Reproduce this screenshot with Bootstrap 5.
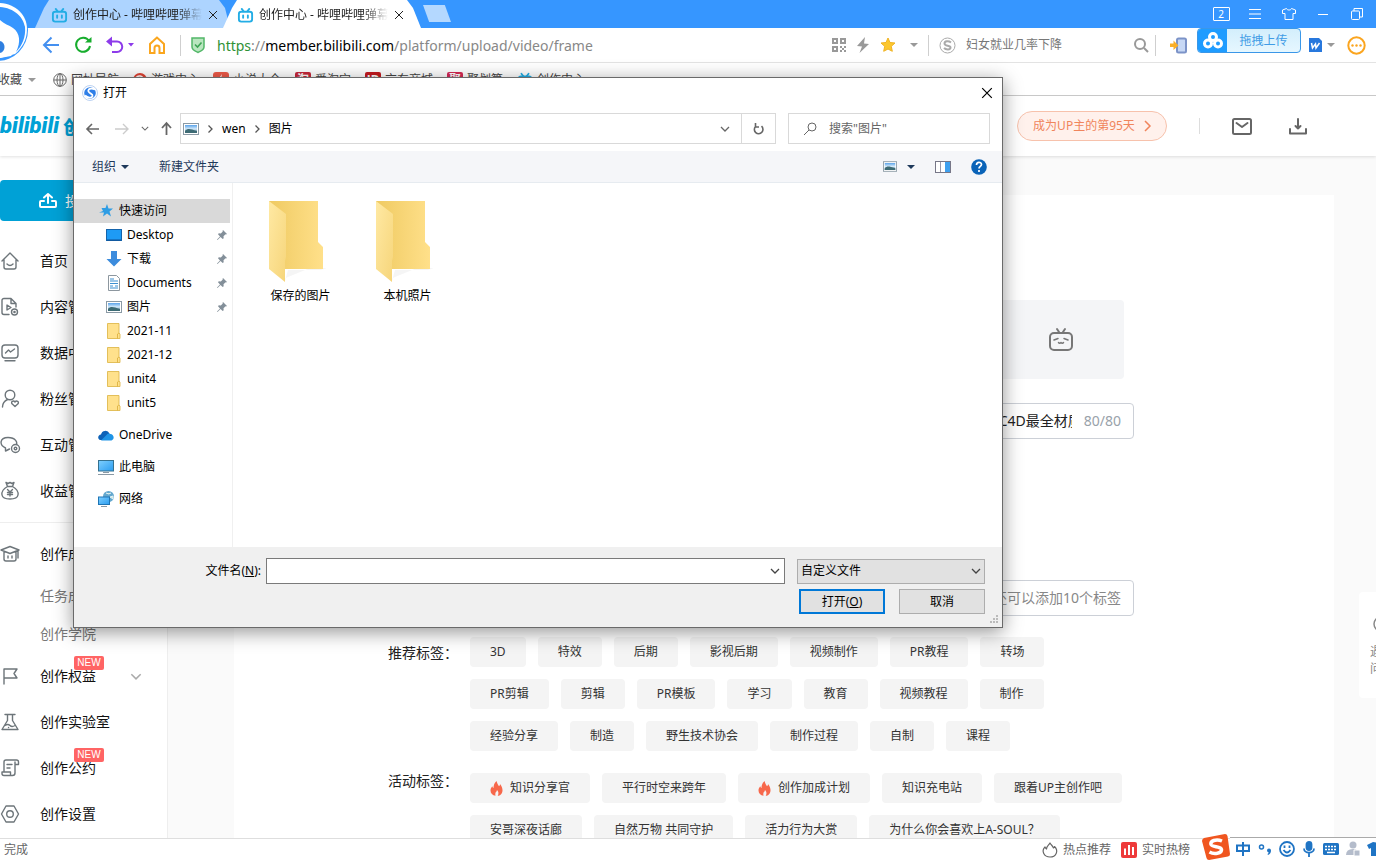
<!DOCTYPE html>
<html lang="zh-CN">
<head>
<meta charset="utf-8">
<meta name="viewport" content="width=device-width, initial-scale=1">
<title>创作中心 - 哔哩哔哩弹幕视频网</title>
<link rel="stylesheet" href="https://cdn.jsdelivr.net/npm/bootstrap@5.3.0/dist/css/bootstrap.min.css">
<style>
:root{--ui:"Noto Sans","Noto Sans CJK SC",sans-serif;--blue:#3696ff;--cyan:#00a1d6}
body{font-family:var(--ui);font-size:12px;line-height:16px;color:#222;background:#fff}
a{color:inherit;text-decoration:none}
button{font:inherit;color:inherit;background:none;border:0;padding:0}
input,select{font:inherit;color:inherit;border:0;padding:0;outline:0;background:none;min-width:0}
svg{display:block;flex:none;overflow:visible}
.ln{fill:none;stroke:currentColor;stroke-width:1.5;stroke-linecap:round;stroke-linejoin:round}
.clip{white-space:nowrap;overflow:hidden}
.g5{gap:5px}.g10{gap:10px}.g12{gap:12px}.g14{gap:14px}
.ml10{margin-left:10px}.ml12{margin-left:12px}.ml16{margin-left:16px}.ml20{margin-left:20px}.ml30{margin-left:30px}
/* browser frame */
.titlebar{background:var(--blue);height:28px;padding:0 2px 0 35px}
.tab{width:195px;height:28px;padding:2px 12px 0 16px;background:#add4ff;clip-path:polygon(0 100%,9px 8px,14px 0,184px 0,190px 8px,100% 100%);gap:5px}
.tab-on{background:#fff;width:198px;margin-left:-7px;padding:2px 17px 0 14px}
.tab-name{font-size:12px;width:129px;-webkit-mask-image:linear-gradient(90deg,#000 80%,transparent);mask-image:linear-gradient(90deg,#000 80%,transparent)}
.newtab{width:28px;height:17px;background:#b4d8ff;margin:5px 0 0 2px;clip-path:polygon(0 0,78% 0,100% 100%,22% 100%)}
.wbtn{width:34px;height:28px;color:#fff}
.count{width:17px;height:14px;border:1px solid #fff;border-radius:1px;font-size:10px;line-height:12px}
.brandmark{left:0;top:0;z-index:3}
.toolbar{height:35px;padding:0 10px 0 42px;border-bottom:1px solid #e3e3e3}
.vsep{width:1px;height:21px;background:#cfcfcf}
.url{font-size:14px;margin-left:12px;padding-top:2px;color:#888}
.url .scheme{color:#2f9136}
.url .host{color:#000}
.caret{width:0;height:0;border:4px solid transparent;border-top-color:#999;border-bottom:0}
.caret-w{margin:0 12px 0 5px}
.sq{width:167px;color:#777;margin-left:10px}
.sq::placeholder{color:#777;opacity:1}
.sqsep{margin:0 14px 0 6px}
.drag{width:104px;height:25px;border:1px solid #3a97e8;border-radius:4px;background:linear-gradient(#d3eefc,#e6f7ff);color:#3f9ce6;margin:0 8px 0 10px}
.drag-i{width:29px;background:#1f9cff}
.marks{height:33px;padding-top:2px;border-bottom:1px solid #c8c8c8;color:#444}
.mk{gap:4px;margin-right:14px}
.mk-fav{margin:0 17px 0 -2px;gap:6px}
.mi{width:16px;height:16px;border-radius:2px;font-size:12px;line-height:15px;color:#fff;text-align:center;font-weight:700}
.mi-tao{background:#c8283a}.mi-jd{background:#c51b20}.mi-ju{background:#d62a55}
/* page */
.pagehead{height:60px;box-shadow:0 1px 3px rgba(0,0,0,.12);padding-right:69px;z-index:1;color:#666}
.wordmark{color:var(--cyan);font:italic 900 22px/30px Roboto,"Liberation Sans",sans-serif;gap:4px}
.wordmark b{font:900 18px/24px "Noto Sans CJK SC",sans-serif}
.pill{width:150px;height:30px;border:1px solid #f7c2ac;border-radius:15px;background:#fff1ec;color:#f0855c;gap:9px;margin-right:32px}
.headsep{width:1px;height:16px;background:#ddd;margin-right:32px}
.dl{margin-left:37px}
.side{width:168px;border-right:1px solid #eee;font-size:14px;color:#111}
.post{height:41px;margin-top:24px;margin-bottom:17px;background:var(--cyan);color:#fff;width:147px;border-radius:4px;gap:8px;padding-left:39px}
.si{height:46px;gap:20px}
.sub{height:38px;padding-left:40px;color:#777}
.side svg.ic{color:#6d757a;stroke-width:1.4}
.more{color:#aaa;margin-left:14px}
.rule{height:1px;background:#eee;margin:8px 0}
.new{background:#ff6464;color:#fff;font:10px/14px "Liberation Sans",sans-serif;border-radius:2px;width:30px;text-align:center;left:34px;top:-12px}
.canvas{background:#fafafa;padding:39px 42px 0 66px}
.sheet{background:#fff;padding:105px 200px 0 154px}
.thumb{width:126px;height:79px;background:#f4f5f7;border-radius:4px;margin-right:10px;color:#777}
.fld{height:36px;border:1px solid #ccd0d7;border-radius:4px;font-size:14px;margin-left:82px;padding-right:12px}
.fld-tag{margin-top:141px}
.ttl{width:73px;color:#222}
.cnt{color:#99a2aa}
.tagin{text-align:right;width:100%}
.tagin::placeholder{color:#888;opacity:1}
.flabel{width:82px;font-size:14px;line-height:32px}
.flabel-top{line-height:16px}
.taggroup{margin-top:21px}
.taggroup + .taggroup{margin-top:22px}
.tags{gap:12px;max-width:658px}
.chip{height:30px;padding:0 20px;background:#f4f4f4;border-radius:4px;color:#333;gap:7px}
.help{right:0;top:592px;width:17px;height:106px;background:#fff;padding:24px 0 0 11px;color:#888;line-height:17px;border-radius:4px 0 0 4px}
.help svg{margin:0 0 13px 3px}
/* file dialog */
.dlg{left:73px;top:77px;width:930px;border:1px solid #6a6a6a;background:#fff;box-shadow:0 4px 18px rgba(0,0,0,.42);z-index:5;color:#000}
.dtop{height:29px;padding:0 9px 0 8px}
.dnav{height:31px;margin:6px 12px 7px 12px;color:#666}
.box{border:1px solid #d9d9d9;height:31px}
.path{margin-left:8px;padding-left:2px}
.crumb{margin:0 9px}
.drop{margin-right:11px;color:#666}
.reload{width:34px;border-left:1px solid #d9d9d9}
.find{width:202px;margin-left:12px;padding-left:15px}
.cmd{height:32px;background:#f5f6f9;border-bottom:1px solid #e6ebf0;color:#1e395b;padding:0 15px 0 18px}
.cmd .caret{border-top-color:#1e395b}
.tree{width:159px;height:364px;padding:16px 2px 0 0;border-right:1px solid #f0f0f0}
.ti{height:24px;gap:5px;padding:0 3px 0 32px;width:100%;text-align:left}
.ti.root{padding-left:24px}
.ti.gap8{margin-top:8px}
.on{background:#d9d9d9}
.files{padding:17px 0 0 14px}
.file{width:107px;gap:6px}
.dfoot{background:#f0f0f0;height:80px;padding:11px 17px 0 0}
.combo{width:519px;height:26px;border:1px solid #7a7a7a;background:#fff;padding:0 4px 0 3px;margin:0 12px 0 5px;color:#444}
.selw{width:188px}
.sel{width:100%;height:25px;border:1px solid #adadad;background:#e1e1e1;padding:0 3px;appearance:none;border-radius:0}
.selw svg{right:4px;top:9px;pointer-events:none;color:#444}
.dbtns{margin-top:5px}
.dbtn{width:86px;height:25px;border:1px solid #adadad;background:#e1e1e1}
.dbtn.def{border:2px solid #0078d7}
.grip{right:3px;bottom:3px}
/* status */
.status{height:22px;border-top:1px solid #dedede;color:#666;padding:0 186px 0 4px;background:#fff}
.ime{right:0;bottom:0;width:146px;height:23px;border-top:1px solid #aaa;background:#fff;color:#1f74c4;z-index:4;padding-left:5px;gap:6px;overflow:hidden}
.imes{right:146px;bottom:0;z-index:5}
</style>
</head>
<body class="vh-100 d-flex flex-column overflow-hidden position-relative">
<svg width="0" height="0" class="position-absolute">
<defs>
<linearGradient id="fa" x2="1"><stop stop-color="#efca62"/><stop offset="1" stop-color="#ffe08a"/></linearGradient>
<linearGradient id="fb" x2="1" y2="1"><stop stop-color="#ffe9a3"/><stop offset="1" stop-color="#f6d57a"/></linearGradient>
<linearGradient id="sky" x2="0" y2="1"><stop stop-color="#5aa3ea"/><stop offset=".5" stop-color="#d6ebfa"/><stop offset="1" stop-color="#2f5f86"/></linearGradient>
<linearGradient id="scr" x2="1" y2="1"><stop stop-color="#7fd0ff"/><stop offset="1" stop-color="#2a9cf0"/></linearGradient>
</defs>
<symbol id="tv" viewBox="0 0 18 18"><g fill="none" stroke="#23ade5" stroke-width="2" stroke-linecap="round"><rect x="2" y="5" width="14" height="10.500" rx="2.500"/><path d="M5 2l2 2.500M13 2l-2 2.500M6.500 9v2.500M11.500 9v2.500"/></g></symbol>
<symbol id="x" viewBox="0 0 10 10"><path d="M1 1l8 8M9 1l-8 8" fill="none" stroke="currentColor" stroke-width="1"/></symbol>
<symbol id="chev" viewBox="0 0 10 6"><path d="M1 1l4 4 4-4" fill="none" stroke="currentColor" stroke-width="1.300"/></symbol>
<symbol id="sep" viewBox="0 0 5 8"><path d="M.5.5L4 4 .5 7.500" fill="none" stroke="#555" stroke-width="1.300"/></symbol>
<symbol id="pic" viewBox="0 0 16 12"><rect x=".5" y=".5" width="15" height="11" fill="#fff" stroke="#8b9aa5"/><rect x="2" y="2" width="12" height="8" fill="url(#sky)"/><path d="M2 8c3-3 5-2 12 0v2H2z" fill="#3d6b74"/></symbol>
<symbol id="pin" viewBox="0 0 10 10"><path d="M6 0l4 4-1 .5-.5-.3-2 2 .2 2-1 .8L3.500 7 .5 10 0 9.500l3-3L1 4.300l.8-1 2 .2 2-2L5.500 1z" fill="#838f99"/></symbol>
<symbol id="fold" viewBox="0 0 14 16"><path d="M.5.5h11.500v9.500l1 1v4.500H.5z" fill="#ffe18c" stroke="#e0b94e" stroke-width=".9"/><path d="M10.500 15.500V11l1.500-1" fill="none" stroke="#dcb243" stroke-width=".9"/></symbol>
<symbol id="big" viewBox="0 0 58 82"><path d="M42 68h17l-6 2H20l-3 11-3-1 6-3z" fill="#eee" opacity=".6"/><path d="M1 1h49v41l5 5v22H1z" fill="url(#fa)"/><path d="M1 1l17 13v43l-1 4v21L1 69z" fill="url(#fb)"/></symbol>
<symbol id="sg" viewBox="0 0 16 16"><circle cx="8" cy="8" r="7.500" fill="#fff" stroke="#bcd2f2"/><circle cx="8" cy="8" r="5.800" fill="#2f7fe8"/><path d="M13 4.500C9 2.500 5.500 4 6.500 6.500s4.500 2 4 4.500c-.6 2.500-5 2-7.500-.5" fill="none" stroke="#fff" stroke-width="1.800"/></symbol>
<symbol id="flame" viewBox="0 0 12 15"><path d="M6 0c1 3 1.500 4 2.500 5.200C9.300 4.500 9.500 4 9.500 3 11.500 5.500 12 7.500 12 9.500c0 3-2.300 5.300-4.800 5.300C8.500 12.500 8 10.500 6.500 9c-.3 1.200-.7 1.800-1.300 2.300C4.800 12 4.700 13.500 5 14.800 2 14.500 0 12.400 0 9.600 0 7.800.7 6.400 1.800 5.300c.2.900.5 1.400 1.200 1.700C3 4 4 1.800 6 0z" fill="#f7684b"/></symbol>
</svg>

<!-- browser header -->
<header class="flex-shrink-0 position-relative">
<svg class="brandmark position-absolute" width="30" height="58" viewBox="0 0 30 58"><circle cx="-3" cy="30" r="31" fill="#3696ff"/><path d="M0 3c16 1 27 12 27 26 0 11-5 19-12 25l-15 4z" fill="#fff"/><path d="M0 7c14 1 24 10 25 21-5-9-14-9-25-12z" fill="#3696ff"/><path d="M25 27c1 10-3 19-9 25 5-10 4-19-3-24-4-3-9-4-13-8V10c6 5 20 6 25 17z" fill="#3696ff"/><path d="M0 22c4 4 9 5 13 9 7 7 6 17-2 25l-11 2z" fill="#fff"/><path d="M0 41c6 1 6 11 0 12z" fill="#2f7fe0"/></svg>
<div class="titlebar d-flex">
<div class="tab d-flex align-items-center"><svg width="17" height="17"><use href="#tv"/></svg><a href="#" class="tab-name clip">创作中心 - 哔哩哔哩弹幕视频网</a><button aria-label="关闭" class="ms-auto"><svg width="10" height="10"><use href="#x"/></svg></button></div>
<div class="tab tab-on d-flex align-items-center"><svg width="17" height="17"><use href="#tv"/></svg><a href="#" class="tab-name clip">创作中心 - 哔哩哔哩弹幕视频网</a><button aria-label="关闭" class="ms-auto"><svg width="10" height="10"><use href="#x"/></svg></button></div>
<button class="newtab" aria-label="新标签"></button>
<div class="d-flex ms-auto">
<button class="wbtn d-flex align-items-center justify-content-center"><span class="count">2</span></button>
<button class="wbtn d-flex align-items-center justify-content-center" aria-label="菜单"><svg width="12" height="10" viewBox="0 0 12 10" stroke="#fff"><path d="M0 .5h12M0 5h12M0 9.500h12"/></svg></button>
<button class="wbtn d-flex align-items-center justify-content-center" aria-label="皮肤"><svg width="14" height="12" viewBox="0 0 14 12" fill="none" stroke="#fff"><path d="M4.500.5L.5 2v3.500H3v6h8v-6h2.500V2l-4-1.500C9 2.500 5 2.500 4.500.5z"/></svg></button>
<button class="wbtn d-flex align-items-center justify-content-center" aria-label="最小化"><svg width="10" height="1"><path d="M0 .5h10" stroke="#fff"/></svg></button>
<button class="wbtn d-flex align-items-center justify-content-center" aria-label="还原"><svg width="12" height="12" viewBox="0 0 12 12" fill="none" stroke="#fff"><rect x=".5" y="3" width="8" height="8.500" rx="1"/><path d="M3 3V.5h8.500V9H9"/></svg></button>
</div></div>
<div class="toolbar d-flex align-items-center">
<div class="d-flex align-items-center g14">
<button aria-label="后退"><svg width="18" height="18" viewBox="0 0 18 18" fill="none" stroke="#4490f0" stroke-width="2"><path d="M17 9H2M9.500 1.500L2 9l7.500 7.500"/></svg></button>
<button aria-label="刷新"><svg width="18" height="18" viewBox="0 0 18 18"><path d="M15 5A7 7 0 1 0 16 10" fill="none" stroke="#17ad2d" stroke-width="2"/><path d="M11 6.500h6.500V1z" fill="#17ad2d"/></svg></button>
<button class="d-flex align-items-center gap-1" aria-label="恢复"><svg width="18" height="18" viewBox="0 0 18 18"><path d="M3 5.500h8a5 5 0 0 1 0 10.500H6" fill="none" stroke="#8d3bea" stroke-width="2"/><path d="M0 5.500L6 .5v10z" fill="#8d3bea"/></svg><svg width="6" height="4"><path d="M0 0h6L3 3.500z" fill="#8d3bea"/></svg></button>
<button aria-label="主页"><svg width="18" height="18" viewBox="0 0 18 18" fill="none" stroke="#faa61e" stroke-width="2"><path d="M9 1.500L2 8v9h4.500v-5a2.500 2.500 0 0 1 5 0v5H16V8z"/></svg></button>
<span class="vsep"></span>
</div>
<svg class="ml10" width="14" height="16" viewBox="0 0 14 16"><path d="M1 1h12v9c0 3-3 4-6 5.500C4 14 1 13 1 10z" fill="#b9e6bf" stroke="#52b768" stroke-width="1.500"/><path d="M4 7.500l2.500 2.500L10.500 5.500" fill="none" stroke="#3da454" stroke-width="1.600"/></svg>
<a href="#" class="url"><span class="scheme">https</span>://<span class="host">member.bilibili.com</span>/platform/upload/video/frame</a>
<div class="d-flex align-items-center ms-auto g10">
<svg width="14" height="14" viewBox="0 0 14 14"><path d="M1 1h4v4H1zM9 1h4v4H9zM1 9h4v4H1z" fill="none" stroke="#999" stroke-width="2"/><path d="M8 8h2v2H8zM12 8h2v2h-2zM10 10h2v2h-2zM8 12h2v2H8zM12 12h2v2h-2z" fill="#999"/></svg>
<svg width="14" height="16" viewBox="0 0 14 16"><path d="M9 0L1 9l5 .5L3.500 16 13 7 8 6.500z" fill="#999"/></svg>
<svg width="16" height="16" viewBox="0 0 16 16"><path d="M8 1l2 4.500 5 .5-3.700 3.300 1 5L8 12l-4.300 2.300 1-5L1 6l5-.5z" fill="#fcc72e" stroke="#f0b323"/></svg>
<span class="caret ms-1"></span><span class="vsep"></span>
</div>
<svg class="ml10" width="17" height="17" viewBox="0 0 17 17" fill="none" stroke="#aaa"><circle cx="8.500" cy="8.500" r="7.500"/><path d="M12 5.500C9.500 3.500 5.500 4 5.500 6.500c0 3 6 1.500 6 4 0 2.500-4.500 2.500-6.500.5" stroke-width="2"/></svg>
<input class="sq" placeholder="妇女就业几率下降" aria-label="搜索">
<svg width="16" height="16" viewBox="0 0 16 16" fill="none" stroke="#999" stroke-width="2"><circle cx="7" cy="7" r="5"/><path d="M11 11l4 4"/></svg>
<span class="vsep sqsep"></span>
<svg width="17" height="17" viewBox="0 0 17 17"><rect x="7" y="1.500" width="9" height="14" rx="1.500" fill="#c7d8f5" stroke="#7c93c8" stroke-width="2"/><path d="M0 6.500h3.500V3.500l5 5-5 4.500v-3H0z" fill="#faaf28"/></svg>
<button class="drag d-flex align-self-start overflow-hidden"><span class="drag-i d-flex align-items-center justify-content-center align-self-stretch"><svg width="20" height="17" viewBox="0 0 20 17" fill="none" stroke="#fff" stroke-width="3"><circle cx="10" cy="5" r="3.500"/><circle cx="5" cy="11.500" r="3.500"/><circle cx="15" cy="11.500" r="3.500"/></svg></span><span class="flex-fill align-self-center">拖拽上传</span></button>
<svg width="13" height="14" viewBox="0 0 13 14"><path d="M0 0h10l3 3v11H0z" fill="#2878dd"/><path d="M2.500 5l1 5L6.500 6l.5 4 3.500-5" fill="none" stroke="#fff" stroke-width="1.500"/></svg>
<span class="caret caret-w"></span>
<svg width="19" height="19" viewBox="0 0 19 19"><circle cx="9.500" cy="9.500" r="8.200" fill="none" stroke="#fba51f" stroke-width="2"/><g fill="#fba51f"><circle cx="5.500" cy="9.500" r="1.200"/><circle cx="9.500" cy="9.500" r="1.200"/><circle cx="13.500" cy="9.500" r="1.200"/></g></svg>
</div>
<nav class="marks d-flex align-items-center text-nowrap">
<a href="#" class="mk-fav d-flex align-items-center">收藏<span class="caret"></span></a>
<a href="#" class="mk d-flex align-items-center"><svg width="14" height="14" viewBox="0 0 14 14" fill="none" stroke="#666"><circle cx="7" cy="7" r="6.300"/><ellipse cx="7" cy="7" rx="3" ry="6.300"/><path d="M1 7h12M7 1v12"/></svg>网址导航</a>
<a href="#" class="mk d-flex align-items-center"><svg width="14" height="14"><circle cx="7" cy="7" r="7" fill="#e04334"/><path d="M10 5a4 4 0 1 0 0 4H7" fill="none" stroke="#fff" stroke-width="1.500"/></svg>游戏中心</a>
<a href="#" class="mk d-flex align-items-center"><svg width="16" height="16" viewBox="0 0 16 16"><rect width="16" height="16" rx="3" fill="#ef5b49"/><path d="M9 2L5 8h3l-2 5 5-6H8z" fill="#fff"/></svg>小说大全</a>
<a href="#" class="mk d-flex align-items-center"><span class="mi mi-tao">淘</span>爱淘宝</a>
<a href="#" class="mk d-flex align-items-center"><span class="mi mi-jd">JD</span>京东商城</a>
<a href="#" class="mk d-flex align-items-center"><span class="mi mi-ju">聚</span>聚划算</a>
<a href="#" class="mk d-flex align-items-center"><svg width="16" height="16"><use href="#tv"/></svg>创作中心</a>
</nav>
</header>

<!-- creator centre page -->
<div class="flex-fill d-flex flex-column overflow-hidden">
<div class="pagehead d-flex align-items-center flex-shrink-0 bg-white position-relative">
<a href="#" class="wordmark d-flex align-items-center text-nowrap">bilibili<b>创作中心</b></a>
<a href="#" class="pill d-flex align-items-center justify-content-center ms-auto">成为UP主的第95天<svg width="7" height="12" viewBox="0 0 7 12" fill="none" stroke="currentColor" stroke-width="1.500"><path d="M1 1l5 5-5 5"/></svg></a>
<span class="headsep"></span>
<a href="#" aria-label="消息"><svg width="20" height="17" viewBox="0 0 20 17" class="ln"><rect x="1" y="1" width="18" height="15" rx="1.500" stroke-width="2"/><path d="M4.500 5l5.500 4 5.500-4" stroke-width="2"/></svg></a>
<a href="#" aria-label="下载" class="dl"><svg width="18" height="17" viewBox="0 0 18 17" class="ln"><path d="M1 11v4.500h16V11M9 1v9.500M6.500 8L9 10.500 11.500 8" stroke-width="2"/></svg></a>
</div>
<div class="d-flex flex-fill overflow-hidden">
<aside class="side flex-shrink-0 bg-white">
<a href="#" class="post d-flex align-items-center"><svg width="18" height="15" viewBox="0 0 18 15" class="ln"><path d="M5 8H2a1 1 0 0 0-1 1v4a1 1 0 0 0 1 1h14a1 1 0 0 0 1-1V9a1 1 0 0 0-1-1h-3M9 10V1M5 4.500L9 1l4 3.500" stroke-width="2"/></svg>投稿</a>
<a href="#" class="si d-flex align-items-center"><svg width="20" height="20" viewBox="0 0 20 20" class="ln ic"><path d="M2 10l8-8 8 8M4 9v7a2 2 0 0 0 2 2h8a2 2 0 0 0 2-2V9M7 13q3 3 6 0"/></svg>首页</a>
<a href="#" class="si d-flex align-items-center"><svg width="20" height="20" viewBox="0 0 20 20" class="ln ic"><path d="M9 17.500H4a2 2 0 0 1-2-2V3.500a2 2 0 0 1 2-2h7l5 5V10M11 1.500v5h5M7 8v5l4-2.500z"/><circle cx="14.500" cy="15" r="3"/><circle cx="14.500" cy="15" r=".6"/></svg>内容管理</a>
<a href="#" class="si d-flex align-items-center"><svg width="20" height="20" viewBox="0 0 20 20" class="ln ic"><rect x="2" y="2" width="16" height="13" rx="3"/><path d="M5.500 10l3-3 2 2 4-3M5 17.800h10"/></svg>数据中心</a>
<a href="#" class="si d-flex align-items-center"><svg width="20" height="20" viewBox="0 0 20 20" class="ln ic"><circle cx="10" cy="6" r="4.800"/><path d="M2.500 18c0-4 2-6 5-7.500M15 17.500l-3-2.700c-1.500-2 1.500-3.800 3-1.800 1.500-2 4.500-.2 3 1.800z"/></svg>粉丝管理</a>
<a href="#" class="si d-flex align-items-center"><svg width="20" height="20" viewBox="0 0 20 20" class="ln ic"><path d="M9.500 14l-4 2v-3C-1 10-.5 2.500 8 2.500S17 8 16.500 9"/><circle cx="15.500" cy="13.500" r="4"/><circle cx="15.500" cy="13.500" r="1.300"/></svg>互动管理</a>
<a href="#" class="si d-flex align-items-center"><svg width="20" height="20" viewBox="0 0 20 20" class="ln ic"><path d="M6 1.500l2 1 2-1 2 1 2-1-1.500 4h-5zM7.500 5.500C3 8 1.500 11 2 14c.5 3 3 4 8 4s7.500-1 8-4c.5-3-1-6-5.500-8.500M7.500 8.500L10 11l2.500-2.500M10 11v4M7.500 11.500h5M7.500 13.500h5"/></svg>收益管理</a>
<div class="rule"></div>
<a href="#" class="si d-flex align-items-center"><svg width="20" height="20" viewBox="0 0 20 20" class="ln ic"><path d="M1 6l9-3.500L19 6l-9 3.500zM4 8v7a2 2 0 0 0 2 2h8a2 2 0 0 0 2-2V8M18 7v7M8 12v2M12 12v2"/></svg>创作成长</a>
<a href="#" class="sub d-flex align-items-center">任务成就</a>
<a href="#" class="sub d-flex align-items-center">创作学院</a>
<a href="#" class="si d-flex align-items-center"><svg width="20" height="20" viewBox="0 0 20 20" class="ln ic"><path d="M4 18V3h13l-3 4.500 3 4.500H4"/></svg><span class="position-relative">创作权益<span class="new position-absolute">NEW</span></span><svg class="more" width="12" height="7"><use href="#chev"/></svg></a>
<a href="#" class="si d-flex align-items-center"><svg width="20" height="20" viewBox="0 0 20 20" class="ln ic"><path d="M5 2.500h10M7.500 2.500v6L2 17.500h16l-5.500-9v-6M5 13.500q3-2 5 0t5 0M8.500 15.500h.1"/></svg>创作实验室</a>
<a href="#" class="si d-flex align-items-center"><svg width="20" height="20" viewBox="0 0 20 20" class="ln ic"><path d="M4 14V4a2 2 0 0 1 2-2h10.500a2 2 0 0 1 2 2v2.500H15M15 4v11a2.500 2.500 0 0 1-2.500 2.500H4a2 2 0 0 1-2-2V14h8.500v2.500M7 6.500h5M7 10h3"/></svg><span class="position-relative">创作公约<span class="new position-absolute">NEW</span></span></a>
<a href="#" class="si d-flex align-items-center"><svg width="20" height="20" viewBox="0 0 20 20" class="ln ic"><path d="M6 2h8l4.500 8-4.500 8H6l-4.500-8z"/><circle cx="10" cy="10" r="3.300"/></svg>创作设置</a>
</aside>
<main class="canvas flex-fill overflow-hidden">
<div class="sheet h-100">
<div class="d-flex justify-content-end"><div class="thumb d-flex align-items-center justify-content-center"><svg width="26" height="26" viewBox="0 0 26 26" class="ln"><rect x="2" y="6" width="22" height="17" rx="4" stroke-width="2"/><path d="M9 2l2 3M17 2l-2 3" stroke-width="2"/><path d="M6 13l4-1.500M20 13l-4-1.500M10.500 15.500q1 1.500 2.500 0 1.500 1.500 2.500 0"/></svg></div></div>
<div class="fld d-flex align-items-center justify-content-end mt-4 g12"><input class="ttl" aria-label="标题" value="C4D最全材质"><span class="cnt">80/80</span></div>
<div class="fld fld-tag d-flex align-items-center"><input class="tagin" aria-label="标签" placeholder="还可以添加10个标签"></div>
<div class="taggroup d-flex"><span class="flabel flex-shrink-0">推荐标签：</span><div class="tags d-flex flex-wrap">
<button class="chip">3D</button><button class="chip">特效</button><button class="chip">后期</button><button class="chip">影视后期</button><button class="chip">视频制作</button><button class="chip">PR教程</button><button class="chip">转场</button>
<button class="chip">PR剪辑</button><button class="chip">剪辑</button><button class="chip">PR模板</button><button class="chip">学习</button><button class="chip">教育</button><button class="chip">视频教程</button><button class="chip">制作</button>
<button class="chip">经验分享</button><button class="chip">制造</button><button class="chip">野生技术协会</button><button class="chip">制作过程</button><button class="chip">自制</button><button class="chip">课程</button></div></div>
<div class="taggroup d-flex"><span class="flabel flabel-top flex-shrink-0">活动标签：</span><div class="tags d-flex flex-wrap">
<button class="chip d-flex align-items-center"><svg width="13" height="15"><use href="#flame"/></svg>知识分享官</button><button class="chip">平行时空来跨年</button><button class="chip d-flex align-items-center"><svg width="13" height="15"><use href="#flame"/></svg>创作加成计划</button><button class="chip">知识充电站</button><button class="chip">跟着UP主创作吧</button>
<button class="chip">安哥深夜话廊</button><button class="chip">自然万物 共同守护</button><button class="chip">活力行为大赏</button><button class="chip">为什么你会喜欢上A-SOUL？</button></div></div>
</div></main></div></div>

<a href="#" class="help position-absolute overflow-hidden"><svg width="14" height="14" viewBox="0 0 14 14" class="ln"><circle cx="8" cy="8" r="7"/></svg>遇<br>问</a>

<!-- open-file dialog -->
<div class="dlg position-absolute" role="dialog" aria-label="打开">
<div class="dtop d-flex align-items-center g5"><svg width="16" height="16"><use href="#sg"/></svg><span>打开</span><button class="ms-auto" aria-label="关闭"><svg width="12" height="12"><use href="#x"/></svg></button></div>
<div class="dnav d-flex align-items-center">
<button aria-label="后退"><svg width="13" height="12" viewBox="0 0 13 12" fill="none" stroke="#666" stroke-width="1.600"><path d="M13 6H1M6 1L1 6l5 5"/></svg></button>
<button aria-label="前进" class="ml16"><svg width="14" height="12" viewBox="0 0 14 12" fill="none" stroke="#ccc" stroke-width="1.400"><path d="M0 6h13M8 1l5 5-5 5"/></svg></button>
<button aria-label="历史" class="ml12"><svg width="8" height="5"><use href="#chev"/></svg></button>
<button aria-label="上移" class="ml12"><svg width="11" height="13" viewBox="0 0 11 13" fill="none" stroke="#666" stroke-width="1.800"><path d="M5.500 13V1M1 6l4.500-5L10 6"/></svg></button>
<div class="box path flex-fill d-flex align-items-center text-black"><svg width="16" height="12"><use href="#pic"/></svg>
<svg class="crumb" width="5" height="8"><use href="#sep"/></svg><a href="#">wen</a><svg class="crumb" width="5" height="8"><use href="#sep"/></svg><a href="#">图片</a>
<button class="drop ms-auto" aria-label="展开"><svg width="10" height="6"><use href="#chev"/></svg></button>
<button class="reload align-self-stretch d-flex align-items-center justify-content-center" aria-label="刷新"><svg width="11" height="12" viewBox="0 0 11 12" fill="none" stroke="#666" stroke-width="1.600"><path d="M8.500 3.200A4.300 4.300 0 1 1 2.500 3.500M2.500 0v4H6"/></svg></button></div>
<label class="box find d-flex align-items-center g12"><svg width="13" height="13" viewBox="0 0 13 13" fill="none" stroke="#666"><circle cx="8" cy="5" r="4"/><path d="M5 8l-5 5"/></svg><input class="flex-fill" aria-label="搜索" value='搜索"图片"'></label>
</div>
<div class="cmd d-flex align-items-center"><button class="d-flex align-items-center g5">组织<span class="caret"></span></button><button class="ml30">新建文件夹</button>
<button class="ms-auto d-flex align-items-center g10" aria-label="视图"><svg width="14" height="11"><use href="#pic"/></svg><span class="caret"></span></button>
<button class="ml20" aria-label="预览窗格"><svg width="16" height="12" viewBox="0 0 16 12"><rect x=".5" y=".5" width="15" height="11" fill="#fff" stroke="#778"/><path d="M5.500 1v10" stroke="#99a"/><rect x="10" y="1" width="5" height="10" fill="#3fa0ee"/></svg></button>
<button class="ml20" aria-label="帮助"><svg width="16" height="16"><circle cx="8" cy="8" r="7.800" fill="#0a63b8"/><path d="M5.500 6c0-3.500 5-3.300 5-.5 0 1.800-2.500 2-2.500 4M8 11v2" fill="none" stroke="#fff" stroke-width="1.700"/></svg></button></div>
<div class="d-flex">
<div class="tree flex-shrink-0">
<button class="ti root on d-flex align-items-center"><svg width="16" height="14" viewBox="0 0 16 14"><path d="M9 0l1.500 4.500H15l-3.500 3 1.500 5-4-3-4 3 1-4H1l4-1.500-1.500-3H7.500z" fill="#2f9de4"/></svg>快速访问</button>
<button class="ti d-flex align-items-center"><svg width="16" height="12" viewBox="0 0 16 12"><rect x=".5" y=".5" width="15" height="11" fill="#1e9bf5" stroke="#1464ac"/><path d="M1 11h14" stroke="#0f4f93"/></svg>Desktop<svg class="ms-auto" width="10" height="10"><use href="#pin"/></svg></button>
<button class="ti d-flex align-items-center"><svg width="16" height="16" viewBox="0 0 16 16"><path d="M5 0h6v8h4.500L8 15.500.5 8H5z" fill="#3c8cdd"/></svg>下载<svg class="ms-auto" width="10" height="10"><use href="#pin"/></svg></button>
<button class="ti d-flex align-items-center"><svg width="16" height="16" viewBox="0 0 16 16"><path d="M2.500.5h8l3 3v12h-11z" fill="#fff" stroke="#8d979f"/><path d="M4 4h4M4 6h8M4 8.500h8M4 11h3M9 11h3M4 13h8" stroke="#3d8fd0"/></svg>Documents<svg class="ms-auto" width="10" height="10"><use href="#pin"/></svg></button>
<button class="ti d-flex align-items-center"><svg width="16" height="12"><use href="#pic"/></svg>图片<svg class="ms-auto" width="10" height="10"><use href="#pin"/></svg></button>
<button class="ti d-flex align-items-center"><svg width="16" height="16"><use href="#fold"/></svg>2021-11</button>
<button class="ti d-flex align-items-center"><svg width="16" height="16"><use href="#fold"/></svg>2021-12</button>
<button class="ti d-flex align-items-center"><svg width="16" height="16"><use href="#fold"/></svg>unit4</button>
<button class="ti d-flex align-items-center"><svg width="16" height="16"><use href="#fold"/></svg>unit5</button>
<button class="ti root gap8 d-flex align-items-center"><svg width="16" height="11" viewBox="0 0 16 11"><path d="M3 4.500a4.500 4.500 0 0 1 8.500-1L8 10H2C-.5 9-.5 5 3 4.500z" fill="#0d62b8"/><path d="M3 10.500L8 5.500q2-3 4.500-1.500c3.500.5 4.500 5 1 6.500z" fill="#1f94e6"/></svg>OneDrive</button>
<button class="ti root gap8 d-flex align-items-center"><svg width="16" height="15" viewBox="0 0 16 15"><rect x=".5" y=".5" width="15" height="10.500" fill="url(#scr)" stroke="#35718f"/><path d="M5 12.500h6M0 14.500h16" stroke="#8a99a5"/></svg>此电脑</button>
<button class="ti root gap8 d-flex align-items-center"><svg width="16" height="16" viewBox="0 0 16 16"><circle cx="10.500" cy="5.500" r="5.500" fill="#64a8ce"/><path d="M8 2q3 2 5 0M12 6l3-1v3z" stroke="#e0f0f8" fill="#cfe6c4"/><rect x=".5" y="6" width="11" height="7.500" fill="url(#scr)" stroke="#1e75b5"/><path d="M3 15.500h6" stroke="#8a99a5"/></svg>网络</button>
</div>
<div class="files d-flex flex-fill align-items-start">
<button class="file d-flex flex-column align-items-center"><svg width="58" height="82" class="me-2"><use href="#big"/></svg><span>保存的图片</span></button>
<button class="file d-flex flex-column align-items-center"><svg width="58" height="82" class="me-2"><use href="#big"/></svg><span>本机照片</span></button>
</div></div>
<div class="dfoot position-relative">
<div class="d-flex justify-content-end align-items-center"><label for="fn">文件名(<u>N</u>):</label><div class="combo d-flex align-items-center"><input id="fn" class="flex-fill h-100"><svg width="10" height="6"><use href="#chev"/></svg></div>
<div class="selw position-relative"><select class="sel" aria-label="文件类型"><option>自定义文件</option></select><svg class="position-absolute" width="10" height="6"><use href="#chev"/></svg></div></div>
<div class="dbtns d-flex justify-content-end g14"><button class="dbtn def">打开(<u>O</u>)</button><button class="dbtn">取消</button></div>
<svg class="grip position-absolute" width="9" height="9" viewBox="0 0 9 9" fill="#bbb"><path d="M6 0h2v2H6zM3 3h2v2H3zM6 3h2v2H6zM0 6h2v2H0zM3 6h2v2H3zM6 6h2v2H6z"/></svg>
</div></div>

<!-- status bar -->
<footer class="status d-flex align-items-center flex-shrink-0 g10"><span>完成</span>
<a href="#" class="ms-auto d-flex align-items-center g5"><svg width="16" height="16" viewBox="0 0 16 16" class="ln"><path d="M8 1c1 2 3 3 3.500 5 1-.5 1-1 1-1.500C17 9 14 15 8 15S-1 9 3 5c.5 1 .5 1.500 1.500 2C4.500 4 7 3 8 1z" stroke-width="1.200"/></svg>热点推荐</a>
<a href="#" class="d-flex align-items-center g5"><svg width="16" height="16" viewBox="0 0 16 16"><rect width="16" height="16" rx="2" fill="#ee3a3a"/><path d="M4 6.500V13M8 3v10M12 5v8" stroke="#fff" stroke-width="2"/></svg>实时热榜</a>
</footer>
<svg class="imes position-absolute" width="28" height="26" viewBox="0 0 28 26"><path d="M2 4L23 0q2 0 2.500 2L28 20q0 2-2 2.500L7 26q-2 0-2.500-2L0 7q0-2 2-3z" fill="#f0561f"/><path d="M20 7C14 4.500 8 7 9 10.500c1 3 10 1.500 10.500 5C20 19.500 12 20.500 7.500 18" fill="none" stroke="#fff" stroke-width="3.500"/></svg>
<div class="ime position-absolute d-flex align-items-center">
<svg width="16" height="16" viewBox="0 0 16 16" fill="none" stroke="currentColor" stroke-width="2"><path d="M2 4.500h12v5.500H2zM8 1v14"/></svg>
<svg width="16" height="16" viewBox="0 0 16 16"><circle cx="4.500" cy="6" r="2" fill="none" stroke="currentColor" stroke-width="1.500"/><path d="M10 9.500a2 2 0 0 1 4 0q0 3-3 4.500l-.5-1q1.200-.7 1.200-1.500-1.700-.3-1.700-2z" fill="currentColor"/></svg>
<svg width="16" height="16" viewBox="0 0 16 16" fill="none" stroke="currentColor" stroke-width="1.800"><circle cx="8" cy="8" r="7"/><path d="M4.500 9q3.500 5 7 0M5.500 4.500v2.500M10.500 4.500v2.500"/></svg>
<svg width="16" height="16" viewBox="0 0 16 16" fill="none" stroke="currentColor" stroke-width="1.800"><rect x="5.500" y="1" width="5" height="8" rx="2.500" fill="currentColor"/><path d="M3 7.500c0 5.500 10 5.500 10 0M8 12v4"/></svg>
<svg width="16" height="16" viewBox="0 0 16 16"><rect y="2" width="16" height="12" rx="1.500" fill="currentColor"/><path d="M2 5.500h12M2 8.500h12" stroke="#fff" stroke-width="1.500" stroke-dasharray="2 1"/><path d="M4 11.500h8" stroke="#fff" stroke-width="1.500"/></svg>
<svg width="16" height="16" viewBox="0 0 16 16" fill="#b4bccb"><circle cx="8" cy="4" r="3.500"/><path d="M1 14q0-6 7-6 3 0 5 2v4z"/><path d="M9 9h6v6H9z" stroke="#fff"/></svg>
<svg width="16" height="16" viewBox="0 0 16 16"><path d="M6 1L0 4l2 4 2-1v8h10V2z" fill="#1f74c4"/></svg>
</div>
<script src="https://cdn.jsdelivr.net/npm/bootstrap@5.3.0/dist/js/bootstrap.bundle.min.js"></script>
</body>
</html>
